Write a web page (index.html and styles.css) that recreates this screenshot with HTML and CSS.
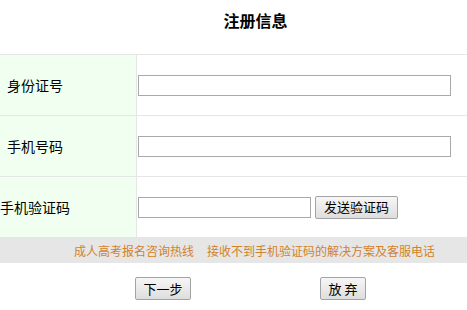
FILE: index.html
```html
<!DOCTYPE html>
<html lang="zh-CN">
<head>
<meta charset="utf-8">
<title>注册信息</title>
<link rel="stylesheet" href="styles.css">
</head>
<body>
<div class="page">
  <h2 class="title">注册信息</h2>
  <div class="form">
    <div class="row">
      <div class="label"><span class="label-text">身份证号</span></div>
      <div class="field"><input class="input input-long" type="text"></div>
    </div>
    <div class="row">
      <div class="label"><span class="label-text">手机号码</span></div>
      <div class="field"><input class="input input-long" type="text"></div>
    </div>
    <div class="row">
      <div class="label"><span class="label-text">手机验证码</span></div>
      <div class="field">
        <input class="input input-short" type="text">
        <button class="btn btn-send" type="button">发送验证码</button>
      </div>
    </div>
  </div>
  <div class="band">
    <a class="band-link" href="#">成人高考报名咨询热线</a>
    <a class="band-link" href="#">接收不到手机验证码的解决方案及客服电话</a>
  </div>
  <div class="actions">
    <button class="btn btn-next" type="button">下一步</button>
    <button class="btn btn-quit" type="button">放 弃</button>
  </div>
</div>
</body>
</html>
```

FILE: styles.css
```css
* { box-sizing: border-box; }
html, body { margin: 0; padding: 0; background: #fff; }
body {
  font-family: "Noto Sans CJK SC", "Microsoft YaHei", sans-serif;
  color: #000;
  width: 467px;
}
.title {
  margin: 0;
  height: 54px;
  padding: 8px 0 0 44px;
  font-size: 16px;
  line-height: 24px;
  font-weight: bold;
  text-align: center;
}
.form {
  border-top: 1px solid #e6e6e6;
}
.row {
  display: flex;
  height: 61px;
  border-bottom: 1px solid #e6e6e6;
}
.row:last-child { border-bottom: none; height: 60px; }
.label {
  width: 137px;
  background: #f0fff0;
  border-right: 1px solid #e6e6e6;
  display: flex;
  align-items: center;
}
.label-text {
  width: 70px;
  text-align: center;
  font-size: 14px;
  line-height: 20px;
  white-space: nowrap;
}
.field {
  flex: 1;
  display: flex;
  align-items: center;
  padding-left: 1px;
}
.input {
  height: 21px;
  border: 1px solid #a9a9a9;
  background: #fff;
  padding: 0 2px;
  margin: 0;
  font-size: 13px;
}
.input-long { width: 313px; }
.input-short { width: 173px; margin-right: 4px; }
.btn {
  height: 23px;
  padding: 0;
  margin: 0;
  border: 1px solid #a3a3a3;
  border-radius: 2px;
  background: linear-gradient(#f6f6f6, #dedede);
  font-family: "Noto Sans CJK SC", "Microsoft YaHei", sans-serif;
  font-size: 13px;
  line-height: 20px;
  color: #000;
}
.btn-send { width: 83px; }
.band {
  height: 26px;
  background: #e6e6e6;
  display: flex;
  justify-content: flex-end;
  align-items: center;
  gap: 13px;
  padding-right: 32px;
}
.band-link {
  font-size: 12px;
  color: #d2822a;
  text-decoration: none;
  white-space: nowrap;
}
.actions {
  display: flex;
  padding: 14px 0 0 135px;
}
.btn-next { width: 56px; }
.btn-quit { width: 46px; margin-left: 129px; }
```
